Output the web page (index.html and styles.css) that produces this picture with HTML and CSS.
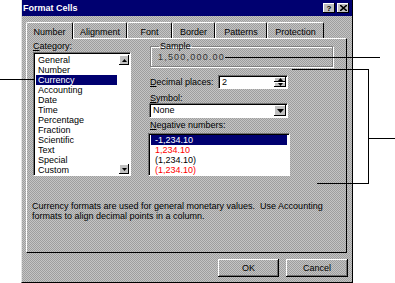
FILE: index.html
```html
<!DOCTYPE html>
<html lang="en">
<head>
    <meta charset="UTF-8">
    <title>Format Cells</title>
    <link rel="stylesheet" href="styles.css">
</head>
<body>
    <div class="dialog">
        <div class="titlebar">
            <span class="title">Format Cells</span>
            <span class="tbtns">
                <span class="tbtn help">?</span>
                <span class="tbtn close">
                    <svg width="7" height="6" viewBox="0 0 7 6"><path d="M0 0 L7 6 M7 0 L0 6" stroke="#000" stroke-width="1.6"/></svg>
                </span>
            </span>
        </div>

        <div class="tabs">
            <div class="tab active w-number">Number</div>
            <div class="tab w-align">Alignment</div>
            <div class="tab w-font">Font</div>
            <div class="tab w-border">Border</div>
            <div class="tab w-patterns">Patterns</div>
            <div class="tab w-protect">Protection</div>
        </div>

        <div class="panel">
            <div class="top">
                <div class="leftcol">
                    <div class="label"><u>C</u>ategory:</div>
                    <div class="listbox">
                        <div class="items">
                            <div class="item">General</div>
                            <div class="item">Number</div>
                            <div class="item selected">Currency</div>
                            <div class="item">Accounting</div>
                            <div class="item">Date</div>
                            <div class="item">Time</div>
                            <div class="item">Percentage</div>
                            <div class="item">Fraction</div>
                            <div class="item">Scientific</div>
                            <div class="item">Text</div>
                            <div class="item">Special</div>
                            <div class="item">Custom</div>
                        </div>
                        <div class="scroll">
                            <div class="arrowbtn">
                                <svg width="5" height="3" viewBox="0 0 5 3"><polygon points="0,3 2.5,0 5,3" fill="#000"/></svg>
                            </div>
                            <div class="arrowbtn">
                                <svg width="5" height="3" viewBox="0 0 5 3"><polygon points="0,0 5,0 2.5,3" fill="#000"/></svg>
                            </div>
                        </div>
                    </div>
                </div>

                <div class="rightcol">
                    <fieldset class="sample">
                        <legend>Sample</legend>
                        <span class="sampleval">1,500,000.00</span>
                    </fieldset>

                    <div class="decrow">
                        <span class="label"><u>D</u>ecimal places:</span>
                        <div class="spin">
                            <span class="spinval">2</span>
                            <div class="spinbtns">
                                <div class="spinbtn">
                                    <svg width="5" height="3" viewBox="0 0 5 3"><polygon points="0,3 2.5,0 5,3" fill="#000"/></svg>
                                </div>
                                <div class="spinbtn">
                                    <svg width="5" height="3" viewBox="0 0 5 3"><polygon points="0,0 5,0 2.5,3" fill="#000"/></svg>
                                </div>
                            </div>
                        </div>
                    </div>

                    <div class="label symlabel"><u>S</u>ymbol:</div>
                    <div class="combo">
                        <span class="comboval">None</span>
                        <div class="dropbtn">
                            <svg width="7" height="4" viewBox="0 0 7 4"><polygon points="0,0 7,0 3.5,4" fill="#000"/></svg>
                        </div>
                    </div>

                    <div class="label neglabel"><u>N</u>egative numbers:</div>
                    <div class="neglist">
                        <div class="item selected">-1,234.10</div>
                        <div class="item red">1,234.10</div>
                        <div class="item">(1,234.10)</div>
                        <div class="item red">(1,234.10)</div>
                    </div>
                </div>
            </div>

            <p class="desc">Currency formats are used for general monetary values.&nbsp; Use Accounting<br>formats to align decimal points in a column.</p>
        </div>

        <div class="buttons">
            <div class="btn ok">OK</div>
            <div class="btn cancel">Cancel</div>
        </div>
    </div>

    <!-- callout lines drawn over the screenshot -->
    <div class="line ann-left"></div>
    <div class="line ann-sample"></div>
    <div class="line ann-br-top"></div>
    <div class="line ann-br-v"></div>
    <div class="line ann-br-bot"></div>
    <div class="line ann-br-mid"></div>
</body>
</html>
```

FILE: styles.css
```css
* {
    box-sizing: border-box;
}

body {
    margin: 0;
    width: 395px;
    height: 283px;
    overflow: hidden;
    position: relative;
    background: #fff;
    font-family: "Liberation Sans", Arial, sans-serif;
    font-size: 9px;
    color: #000;
}

.dialog {
    margin-left: 21px;
    width: 332px;
    height: 283px;
    border-left: 1px solid #e4e4e4;
    border-right: 1px solid #000;
    border-bottom: 1px solid #000;
    background: repeating-conic-gradient(#c4c4c4 0 25%, #9e9e9e 0 50%) 0 0 / 2px 2px;
    display: flex;
    flex-direction: column;
}

.titlebar {
    height: 16px;
    background-color: #000070;
    display: flex;
    align-items: center;
    justify-content: space-between;
    padding: 0 3px 0 1px;
}

.title {
    color: #fff;
    font-weight: bold;
    font-size: 9px;
}

.tbtns {
    display: flex;
    gap: 2px;
}

.tbtn {
    width: 12px;
    height: 10px;
    background-color: #c0c0c0;
    box-shadow: inset -1px -1px #000, inset 1px 1px #fff;
    display: flex;
    align-items: center;
    justify-content: center;
    font-weight: bold;
    font-size: 8px;
}

.tabs {
    display: flex;
    margin-top: 6px;
    padding-left: 4px;
    height: 16px;
}

.tab {
    height: 16px;
    line-height: 11px;
    padding-top: 4px;
    text-align: center;
    border-top: 1px solid #fff;
    border-left: 1px solid #fff;
    border-right: 1px solid #000;
    border-radius: 2px 2px 0 0;
}

.tab.active {
    height: 17px;
    position: relative;
    z-index: 1;
    background: repeating-conic-gradient(#c4c4c4 0 25%, #9e9e9e 0 50%) 0 0 / 2px 2px;
}

.w-number { width: 47px; }
.w-align { width: 54px; }
.w-font { width: 45px; }
.w-border { width: 43px; }
.w-patterns { width: 52px; }
.w-protect { width: 57px; }

.panel {
    margin-left: 4px;
    width: 321px;
    height: 215px;
    border-top: 1px solid #fff;
    border-left: 1px solid #fff;
    border-right: 1px solid #000;
    border-bottom: 1px solid #000;
    padding: 2px 0 0 6px;
}

.top {
    display: flex;
}

.label {
    height: 11px;
    line-height: 11px;
}

.leftcol {
    width: 98px;
}

.listbox {
    height: 124px;
    display: flex;
    background: #fff;
    border: 1px solid;
    border-color: #707070 #fff #fff #707070;
    box-shadow: inset 1px 1px #000;
    padding: 2px 1px 1px 2px;
}

.items {
    width: 82px;
}

.item {
    height: 10px;
    line-height: 10px;
    padding-left: 2px;
    white-space: nowrap;
}

.item.selected {
    background-color: #000070;
    color: #fff;
}

.item.red {
    color: #f00;
}

.scroll {
    margin-left: 2px;
    width: 10px;
    display: flex;
    flex-direction: column;
    justify-content: space-between;
}

.arrowbtn, .spinbtn, .dropbtn {
    background-color: #c0c0c0;
    box-shadow: inset -1px -1px #000, inset 1px 1px #fff;
    display: flex;
    align-items: center;
    justify-content: center;
}

.arrowbtn {
    height: 10px;
}

.rightcol {
    margin-left: 17px;
    width: 188px;
    display: flex;
    flex-direction: column;
}

.sample {
    margin: 0 0 0 2px;
    width: 183px;
    height: 26px;
    padding: 1px 0 3px 7px;
    border: 1px solid #808080;
    box-shadow: 1px 1px 0 #fff, inset 1px 1px 0 #fff;
    line-height: 10px;
    min-inline-size: 0;
    color: #333;
}

.sample legend {
    padding: 0 1px;
    margin-left: 1px;
    line-height: 10px;
    color: #000;
}

.sampleval {
    letter-spacing: 1.2px;
}

.decrow {
    margin-top: 8px;
    display: flex;
    align-items: center;
    justify-content: space-between;
    padding-left: 2px;
    width: 140px;
}

.spin, .combo {
    height: 14px;
    background: #fff;
    border: 1px solid;
    border-color: #707070 #fff #fff #707070;
    box-shadow: inset 1px 1px #000;
    display: flex;
    align-items: stretch;
    justify-content: space-between;
    padding: 1px 1px 1px 2px;
}

.spin {
    width: 70px;
}

.spinval, .comboval {
    line-height: 11px;
    padding-left: 1px;
}

.spinbtns {
    width: 12px;
    display: flex;
    flex-direction: column;
}

.spinbtn {
    flex: 1;
}

.symlabel {
    margin-top: 4px;
    padding-left: 2px;
    height: 10px;
    line-height: 10px;
}

.combo {
    margin-left: 1px;
    width: 139px;
    height: 15px;
}

.dropbtn {
    width: 12px;
}

.neglabel {
    margin-top: 2px;
    padding-left: 2px;
    height: 10px;
    line-height: 10px;
}

.neglist {
    margin-top: 3px;
    width: 142px;
    height: 43px;
    background: #fff;
    border: 1px solid;
    border-color: #707070 #fff #fff #707070;
    box-shadow: inset 1px 1px #000;
    padding: 1px 2px 0 2px;
}

.neglist .item {
    padding-left: 4px;
}

.desc {
    margin: 25px 0 0 -1px;
    line-height: 10px;
    white-space: nowrap;
}

.buttons {
    margin-top: 6px;
    display: flex;
    justify-content: flex-end;
    gap: 7px;
    padding-right: 4px;
}

.btn {
    height: 18px;
    line-height: 18px;
    text-align: center;
    box-shadow: inset -1px -1px #000, inset 1px 1px #fff, inset -2px -2px #707070;
}

.ok {
    width: 61px;
}

.cancel {
    width: 62px;
}

.line {
    position: absolute;
    background-color: #000;
}

.ann-left { left: 0; top: 79px; width: 34px; height: 1px; }
.ann-sample { left: 225px; top: 57px; width: 155px; height: 1px; }
.ann-br-top { left: 292px; top: 69px; width: 77px; height: 1px; }
.ann-br-v { left: 368px; top: 69px; width: 1px; height: 115px; }
.ann-br-bot { left: 317px; top: 183px; width: 52px; height: 1px; }
.ann-br-mid { left: 368px; top: 138px; width: 27px; height: 1px; }
```
